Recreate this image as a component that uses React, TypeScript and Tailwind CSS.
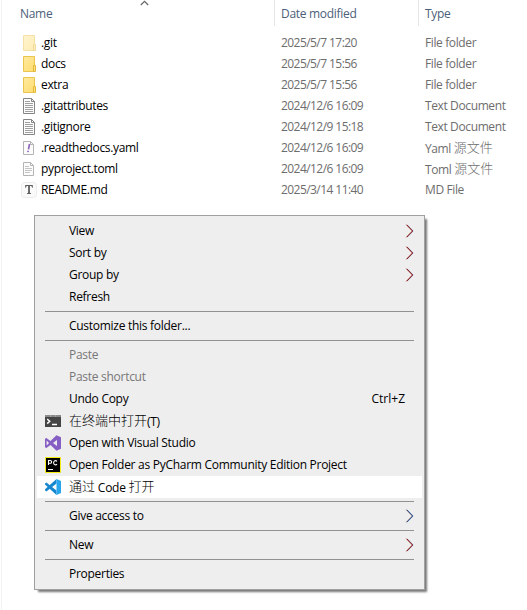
import React from "react";

type IconKind = "hidden" | "folder" | "text" | "yaml" | "toml" | "md";

interface FileRow {
  name: string;
  date: string;
  type: React.ReactNode;
  icon: IconKind;
}

function Cjk({ children }: { children: string }) {
  return <span className="relative -top-px font-['Noto_Sans_CJK_SC',sans-serif] text-[13px] font-light tracking-normal">{children}</span>;
}

const files: FileRow[] = [
  { name: ".git", date: "2025/5/7 17:20", type: "File folder", icon: "hidden" },
  { name: "docs", date: "2025/5/7 15:56", type: "File folder", icon: "folder" },
  { name: "extra", date: "2025/5/7 15:56", type: "File folder", icon: "folder" },
  { name: ".gitattributes", date: "2024/12/6 16:09", type: "Text Document", icon: "text" },
  { name: ".gitignore", date: "2024/12/9 15:18", type: "Text Document", icon: "text" },
  { name: ".readthedocs.yaml", date: "2024/12/6 16:09", type: <>Yaml <Cjk>源文件</Cjk></>, icon: "yaml" },
  { name: "pyproject.toml", date: "2024/12/6 16:09", type: <>Toml <Cjk>源文件</Cjk></>, icon: "toml" },
  { name: "README.md", date: "2025/3/14 11:40", type: "MD File", icon: "md" },
];

function FileIcon({ kind }: { kind: IconKind }) {
  if (kind === "hidden" || kind === "folder") {
    return (
      <svg width="16" height="16" viewBox="0 0 16 16" className={kind === "hidden" ? "opacity-50" : ""}>
        <defs>
          <linearGradient id="folderFill" x1="0" y1="0" x2="1" y2="1">
            <stop offset="0" stopColor="#ffeaa0" />
            <stop offset="1" stopColor="#ffdc70" />
          </linearGradient>
        </defs>
        <path d="M2.5.5h11v15h-11z" fill="url(#folderFill)" stroke="#ebc54e" />
        <path d="M12.5 15.500v-6h2v6z" fill="#ffdf7c" stroke="#e3b93c" />
      </svg>
    );
  }
  if (kind === "md") {
    return (
      <svg width="16" height="16" viewBox="0 0 16 16">
        <rect x=".5" y=".5" width="15" height="15" rx="3" fill="#fafafa" stroke="#ececec" />
        <path d="M4.200 3h7.600v2.800h-.7l-.7-1.700H8.900v6.700l1.100.4v.8H6v-.8l1.100-.4V4.100H5.600l-.7 1.700h-.7z" fill="#5f5f5f" />
      </svg>
    );
  }
  const dark = kind === "text";
  const edge = dark ? "#858585" : "#b4b4b4";
  return (
    <svg width="16" height="16" viewBox="0 0 16 16">
      <path d={dark ? "M2.500.5h8l3 3v12h-11z" : "M2.500 1.500h7l3 3v10h-10z"} fill="#fcfcfc" stroke={edge} />
      <path d={dark ? "M10.500.5v3h3" : "M9.500 1.500v3h3"} fill="none" stroke={edge} />
      {dark && <path d="M4 3.500h5M4 5.500h8M4 7.500h8M4 9.500h8M4 11.500h8M4 13.500h8" stroke="#a0a0a0" />}
      {kind === "toml" && <path d="M4 5.500h4M4 7.500h7M4 9.500h7M4 11.500h5" stroke="#c4c4c4" />}
      {kind === "yaml" && <path d="M8.500 4 7.500 9.300M7.200 10.700l-.3 1.400" stroke="#9068be" strokeWidth="1.700" />}
    </svg>
  );
}

function TerminalIcon() {
  return (
    <svg width="16" height="16" viewBox="0 0 16 16">
      <path d="M0 2h16v12H0z" fill="#444" />
      <path d="M0 2h16v2H0z" fill="#8a8a8a" />
      <path d="M5.500 2v2M10.500 2v2" stroke="#b0b0b0" strokeWidth=".6" />
      <path d="m2.200 6 2.500 2.300-2.500 2.300" fill="none" stroke="#fff" strokeWidth="1.500" />
      <path d="M7 11.500h5" stroke="#fff" strokeWidth="1.500" />
    </svg>
  );
}

function VisualStudioIcon() {
  return (
    <svg width="16" height="16" viewBox="0 0 16 16">
      <path d="m11.500.2 4.500 2v11.600l-4.500 2-6-5.900L1.400 13 0 12.300V3.700L1.400 3l4.100 3.100zM12 5 8 8l4 3zM1.600 5.600v4.800L4 8z" fill="#865fc5" fillRule="evenodd" />
    </svg>
  );
}

function PyCharmIcon() {
  return (
    <svg width="16" height="16" viewBox="0 0 16 16">
      <path d="M.5.500h15v15H.5z" fill="#000" stroke="#f5ee16" />
      <path d="M3.500 8V3.500h1.700a1.300 1.300 0 0 1 0 2.800H3.500M12 4.300c-1.200-1.300-3.400-.8-3.400 1.400s2.200 2.700 3.400 1.400" fill="none" stroke="#fff" strokeWidth="1.100" />
      <path d="M3 12.500h5" stroke="#fff" />
    </svg>
  );
}

function CodeIcon() {
  return (
    <svg width="16" height="16" viewBox="0 0 16 16">
      <path d="M11.500 4.600 1.400 12.500 0 11.300v-1L11.500.1z" fill="#1687ce" />
      <path d="M0 5.500v-1l1.400-1 10.100 7.900v4.500z" fill="#1687ce" />
      <path d="m11.500.1 4.500 2v11.800l-4.500 2z" fill="#27a6ed" />
    </svg>
  );
}

interface Item {
  label: React.ReactNode;
  icon?: React.ReactNode;
  arrow?: "red" | "blue";
  shortcut?: string;
  disabled?: boolean;
  active?: boolean;
}

const groups: Item[][] = [
  [
    { label: "View", arrow: "red" },
    { label: "Sort by", arrow: "red" },
    { label: "Group by", arrow: "red" },
    { label: "Refresh" },
  ],
  [{ label: "Customize this folder..." }],
  [
    { label: "Paste", disabled: true },
    { label: "Paste shortcut", disabled: true },
    { label: "Undo Copy", shortcut: "Ctrl+Z" },
    { label: <><Cjk>在终端中打开</Cjk>(T)</>, icon: <TerminalIcon /> },
    { label: "Open with Visual Studio", icon: <VisualStudioIcon /> },
    { label: "Open Folder as PyCharm Community Edition Project", icon: <PyCharmIcon /> },
    { label: <><Cjk>通过</Cjk> Code <Cjk>打开</Cjk></>, icon: <CodeIcon />, active: true },
  ],
  [{ label: "Give access to", arrow: "blue" }],
  [{ label: "New", arrow: "red" }],
  [{ label: "Properties" }],
];

function MenuItem({ item }: { item: Item }) {
  return (
    <div className={`flex h-[22px] items-center pl-2 pr-2 ${item.active ? "bg-white" : ""} ${item.disabled ? "text-[#777]" : "text-black"}`}>
      <span className="flex w-6 shrink-0 items-center">{item.icon}</span>
      <span className="h-[22px] flex-1 whitespace-nowrap leading-[22px]">{item.label}</span>
      {item.shortcut && <span className="mr-[9px] tracking-normal">{item.shortcut}</span>}
      {item.arrow && (
        <svg width="9" height="14" viewBox="0 0 9 14">
          <path d="m1.200.8 6 6.200-6 6.200" fill="none" stroke="#c98a68" strokeWidth=".8" />
          <path d="m2.200.8 6 6.200-6 6.200" fill="none" stroke="#7fa8e0" strokeWidth=".8" />
          <path d="m1.700.8 6 6.200-6 6.200" fill="none" stroke={item.arrow === "red" ? "#85101c" : "#1c4a88"} strokeWidth="1" />
        </svg>
      )}
    </div>
  );
}

export default function App() {
  return (
    <div className="h-[610px] w-[527px] overflow-hidden bg-white pl-px font-['Open_Sans','Noto_Sans_CJK_SC',sans-serif] text-[12px]">
      <div className="h-full border-l border-[#f3f3f3]">
        <div className="h-[215px]">
          <header className="relative flex h-[26px] items-stretch leading-7 tracking-[-0.3px] text-[#4c607a]">
            <svg className="absolute left-[138px] top-0" width="9" height="6" viewBox="0 0 9 6">
              <path d="m.8 5 3.700-3.700L8.200 5" fill="none" stroke="#666" strokeWidth="1.200" />
            </svg>
            <div className="w-[272px] pl-[18px]">Name</div>
            <div className="w-36 border-l border-[#e5e5e5] pl-[6px]">Date modified</div>
            <div className="border-l border-[#e5e5e5] pl-[6px]">Type</div>
          </header>
          <div className="pt-[6px]">
            {files.map((f) => (
              <div key={f.name} className="flex h-[21px] items-center whitespace-nowrap leading-[21px] text-[#6d6d6d]">
                <span className="ml-[19px] w-5 shrink-0"><FileIcon kind={f.icon} /></span>
                <span className="w-[240px] tracking-[-0.33px] text-black">{f.name}</span>
                <span className="w-36 tracking-[-0.56px]">{f.date}</span>
                <span className="h-[21px] tracking-[-0.38px]">{f.type}</span>
              </div>
            ))}
          </div>
        </div>
        <div className="ml-8 w-[391px] border border-[#a0a0a0] bg-[#eee] px-[2px] py-1 tracking-[-0.28px] shadow-[3px_3px_2px_-1px_#777]">
          {groups.map((group, i) => (
            <React.Fragment key={i}>
              {i > 0 && <div className="mx-2 my-[3px] h-px bg-[#919191]" />}
              {group.map((item, j) => <MenuItem key={j} item={item} />)}
            </React.Fragment>
          ))}
        </div>
      </div>
    </div>
  );
}
